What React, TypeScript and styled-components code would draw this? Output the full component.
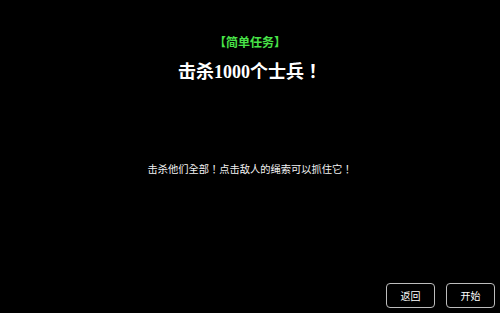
import React from 'react';
import styled, { createGlobalStyle } from 'styled-components';

const GlobalStyle = createGlobalStyle`
  html, body {
    margin: 0;
    padding: 0;
    background: #000;
  }
  body {
    font-family: "Liberation Serif", "Noto Sans CJK TC", serif;
    text-spacing-trim: space-all;
  }
`;

const Screen = styled.div`
  width: 500px;
  height: 313px;
  background: #000;
  display: flex;
  flex-direction: column;
  align-items: center;
  overflow: hidden;
`;

const Tag = styled.div`
  margin-top: 34px;
  font-family: "Noto Sans CJK TC", sans-serif;
  font-size: 12px;
  line-height: 16px;
  font-weight: bold;
  color: #48e448;
  text-spacing-trim: space-all;
`;

const Title = styled.h1`
  margin: 11px 0 0;
  font-family: "Liberation Serif", "Noto Sans CJK TC", serif;
  font-size: 18px;
  line-height: 22px;
  font-weight: bold;
  color: #fff;
  text-spacing-trim: space-all;
`;

const Description = styled.p`
  margin: 79px 0 0;
  font-family: "Noto Sans CJK TC", sans-serif;
  font-size: 10.25px;
  line-height: 14px;
  color: #f2f2f2;
  text-spacing-trim: space-all;
`;

const Actions = styled.div`
  margin-top: auto;
  align-self: flex-end;
  display: flex;
  gap: 11px;
  padding: 0 5px 5px 0;
`;

const Button = styled.button`
  width: 49px;
  height: 25px;
  box-sizing: border-box;
  border: 1px solid #bdbdbd;
  border-radius: 4px;
  background: #000;
  color: #fff;
  font-family: "Noto Sans CJK SC", sans-serif;
  font-size: 10px;
  padding: 0;
  cursor: pointer;
`;

export default function App() {
  return (
    <>
      <GlobalStyle />
      <Screen>
        <Tag>【简单任务】</Tag>
        <Title>击杀1000个士兵！</Title>
        <Description>击杀他们全部！点击敌人的绳索可以抓住它！</Description>
        <Actions>
          <Button>返回</Button>
          <Button>开始</Button>
        </Actions>
      </Screen>
    </>
  );
}
